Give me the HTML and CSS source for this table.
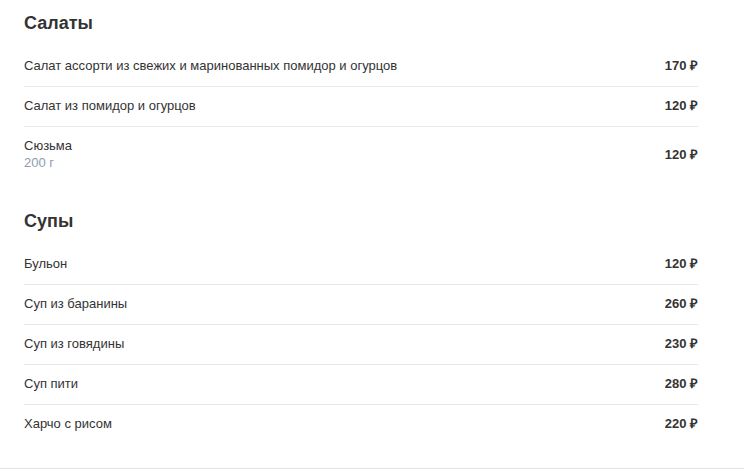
FILE: index.html
```html
<!DOCTYPE html>
<html lang="ru">
<head>
<meta charset="utf-8">
<link rel="stylesheet" href="styles.css">
</head>
<body>
<div class="menu">
  <section class="section">
    <h2 class="section-title">Салаты</h2>
    <div class="item">
      <div class="item-info"><div class="item-name">Салат ассорти из свежих и маринованных помидор и огурцов</div></div>
      <div class="item-price">170 ₽</div>
    </div>
    <div class="item">
      <div class="item-info"><div class="item-name">Салат из помидор и огурцов</div></div>
      <div class="item-price">120 ₽</div>
    </div>
    <div class="item item-last">
      <div class="item-info"><div class="item-name">Сюзьма</div><div class="item-weight">200 г</div></div>
      <div class="item-price">120 ₽</div>
    </div>
  </section>
  <section class="section">
    <h2 class="section-title">Супы</h2>
    <div class="item">
      <div class="item-info"><div class="item-name">Бульон</div></div>
      <div class="item-price">120 ₽</div>
    </div>
    <div class="item">
      <div class="item-info"><div class="item-name">Суп из баранины</div></div>
      <div class="item-price">260 ₽</div>
    </div>
    <div class="item">
      <div class="item-info"><div class="item-name">Суп из говядины</div></div>
      <div class="item-price">230 ₽</div>
    </div>
    <div class="item">
      <div class="item-info"><div class="item-name">Суп пити</div></div>
      <div class="item-price">280 ₽</div>
    </div>
    <div class="item item-last">
      <div class="item-info"><div class="item-name">Харчо с рисом</div></div>
      <div class="item-price">220 ₽</div>
    </div>
  </section>
</div>
<div class="footer-line"></div>
</body>
</html>
```
FILE: styles.css
```css
html, body {
  margin: 0;
  padding: 0;
  background: #fff;
}
body {
  font-family: Arial, "Liberation Sans", sans-serif;
  color: #333;
  font-size: 13px;
}
.menu {
  padding: 0 46px 0 24px;
  height: 468px;
  box-sizing: border-box;
}
.section {
  padding-top: 11px;
  margin-bottom: 15px;
}
.section-title {
  margin: 0 0 12px;
  font-size: 18px;
  line-height: 24px;
  font-weight: bold;
  color: #333;
}
.item {
  display: flex;
  align-items: center;
  justify-content: space-between;
  padding: 11px 0 12px;
  border-bottom: 1px solid #e8e8e8;
  line-height: 16px;
}
.item-last {
  border-bottom: none;
}
.item-weight {
  color: #8c9cb3;
  line-height: 17px;
}
.item-price {
  font-weight: bold;
  white-space: nowrap;
}
.footer-line {
  height: 1px;
  background: #e3e3e3;
}
```
